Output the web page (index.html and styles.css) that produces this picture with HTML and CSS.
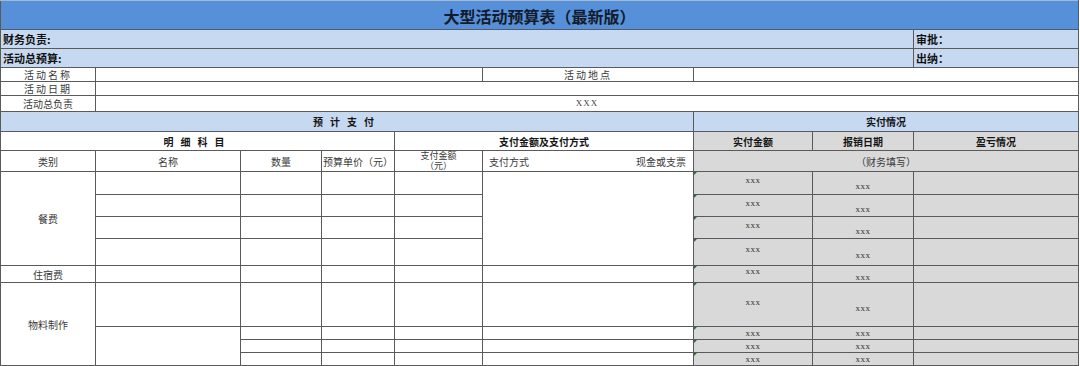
FILE: index.html
```html
<!DOCTYPE html>
<html lang="zh-CN">
<head>
<meta charset="utf-8">
<title>大型活动预算表（最新版）</title>
<link rel="stylesheet" href="styles.css">
</head>
<body>
<table class="sheet">
  <colgroup>
    <col class="c1"><col class="c2"><col class="c3"><col class="c4"><col class="c5"><col class="c6"><col class="c7"><col class="c8"><col class="c9">
  </colgroup>
  <tbody>
    <tr class="h-title"><td colspan="9" class="title">大型活动预算表（最新版）</td></tr>
    <tr class="h-19"><td colspan="8" class="blue lead">财务负责:</td><td class="blue lead">审批：</td></tr>
    <tr class="h-19"><td colspan="8" class="blue lead">活动总预算:</td><td class="blue lead">出纳：</td></tr>
    <tr class="h-14"><td class="lbl spaced">活动名称</td><td colspan="4"></td><td class="lbl spaced">活动地点</td><td colspan="3"></td></tr>
    <tr class="h-14"><td class="lbl spaced">活动日期</td><td colspan="8"></td></tr>
    <tr class="h-16"><td class="lbl">活动总负责</td><td colspan="8" class="serif upper">XXX</td></tr>
    <tr class="h-20"><td colspan="6" class="blue hd wide">预计支付</td><td colspan="3" class="blue hd">实付情况</td></tr>
    <tr class="h-19"><td colspan="4" class="hd wide">明细科目</td><td colspan="2" class="hd">支付金额及支付方式</td><td class="gray hd">实付金额</td><td class="gray hd">报销日期</td><td class="gray hd">盈亏情况</td></tr>
    <tr class="h-21">
      <td class="lbl">类别</td><td class="lbl">名称</td><td class="lbl">数量</td><td class="lbl">预算单价（元）</td>
      <td class="lbl two"><span class="ln">支付金额</span><span class="ln">（元）</span></td>
      <td class="lbl pay"><div class="pay-row"><span>支付方式</span><span>现金或支票</span></div></td>
      <td colspan="3" class="gray lbl">（财务填写）</td>
    </tr>
    <tr class="h-23"><td rowspan="4" class="lbl">餐费</td><td></td><td></td><td></td><td></td><td rowspan="4"></td><td class="gray act flag"><span class="x up">xxx</span></td><td class="gray act"><span class="x down">xxx</span></td><td class="gray"></td></tr>
    <tr class="h-22"><td></td><td></td><td></td><td></td><td class="gray act flag"><span class="x up">xxx</span></td><td class="gray act"><span class="x down">xxx</span></td><td class="gray"></td></tr>
    <tr class="h-22"><td></td><td></td><td></td><td></td><td class="gray act flag"><span class="x up">xxx</span></td><td class="gray act"><span class="x down">xxx</span></td><td class="gray"></td></tr>
    <tr class="h-27"><td></td><td></td><td></td><td></td><td class="gray act flag"><span class="x up">xxx</span></td><td class="gray act"><span class="x down">xxx</span></td><td class="gray"></td></tr>
    <tr class="h-17"><td class="lbl">住宿费</td><td></td><td></td><td></td><td></td><td></td><td class="gray act flag"><span class="x up">xxx</span></td><td class="gray act"><span class="x down">xxx</span></td><td class="gray"></td></tr>
    <tr class="h-44"><td rowspan="4" class="lbl">物料制作</td><td></td><td></td><td></td><td></td><td></td><td class="gray act flag"><span class="x up">xxx</span></td><td class="gray act"><span class="x down">xxx</span></td><td class="gray"></td></tr>
    <tr class="h-13"><td rowspan="3"></td><td></td><td></td><td></td><td></td><td class="gray act flag"><span class="x">xxx</span></td><td class="gray act"><span class="x">xxx</span></td><td class="gray"></td></tr>
    <tr class="h-13"><td></td><td></td><td></td><td></td><td class="gray act flag"><span class="x">xxx</span></td><td class="gray act"><span class="x">xxx</span></td><td class="gray"></td></tr>
    <tr class="h-13"><td></td><td></td><td></td><td></td><td class="gray act flag"><span class="x">xxx</span></td><td class="gray act"><span class="x">xxx</span></td><td class="gray"></td></tr>
  </tbody>
</table>
</body>
</html>
```
FILE: styles.css
```css
html, body {
  margin: 0;
  padding: 0;
  background: #ffffff;
}

body {
  font-family: "Noto Sans CJK SC", "Noto Sans", sans-serif;
  color: #333333;
}

.sheet {
  border-collapse: collapse;
  table-layout: fixed;
  width: 1079px;
  font-size: 10px;
  line-height: 11px;
}

.c1 { width: 95px; }
.c2 { width: 145px; }
.c3 { width: 81px; }
.c4 { width: 73px; }
.c5 { width: 88px; }
.c6 { width: 211px; }
.c7 { width: 119px; }
.c8 { width: 101px; }
.c9 { width: 165px; }

.sheet td {
  border: 1px solid #5a5a5a;
  padding: 0;
  text-align: center;
  vertical-align: middle;
  overflow: hidden;
  white-space: nowrap;
}

.h-title { height: 29px; }
.h-13 { height: 13px; }
.h-14 { height: 14px; }
.h-16 { height: 16px; }
.h-17 { height: 17px; }
.h-19 { height: 19px; }
.h-20 { height: 20px; }
.h-21 { height: 21px; }
.h-22 { height: 22px; }
.h-23 { height: 23px; }
.h-27 { height: 27px; }
.h-44 { height: 44px; }

.sheet .title {
  background: #5590d8;
  border-top-color: #9fb8d8;
  color: #141b2c;
  font-size: 16px;
  font-weight: 700;
  line-height: 20px;
  padding-top: 1px;
}

.blue {
  background: #c6d9f1;
}

.gray {
  background: #d9d9d9;
}

.sheet .lead {
  text-align: left;
  padding-left: 2px;
  font-weight: 700;
  color: #111111;
  font-size: 11px;
}

.lbl {
  color: #3a3a3a;
}

.spaced {
  letter-spacing: 2px;
}

.hd {
  font-weight: 700;
  color: #151515;
}

.wide {
  letter-spacing: 7px;
}

.serif {
  font-family: "Liberation Serif", "DejaVu Serif", serif;
  color: #444444;
}

.upper {
  letter-spacing: 1px;
  font-size: 9px;
}

.sheet td.two {
  font-size: 9px;
  line-height: 10px;
  overflow: visible;
}

.ln {
  display: block;
  height: 10px;
}

.sheet td.pay {
  padding: 0 7px 0 6px;
}

.pay-row {
  display: flex;
  justify-content: space-between;
}

.sheet td.act {
  position: relative;
  line-height: 9px;
}

.flag::before {
  content: "";
  position: absolute;
  left: 0;
  top: 0;
  border-top: 3px solid #2e6b2e;
  border-right: 3px solid transparent;
}

.x {
  font-family: "Liberation Serif", "DejaVu Serif", serif;
  font-size: 9px;
  line-height: 9px;
  letter-spacing: 0.5px;
  color: #333333;
  display: inline-block;
  vertical-align: middle;
}

.up {
  transform: translateY(-3px);
}

.down {
  transform: translateY(3px);
}
```
